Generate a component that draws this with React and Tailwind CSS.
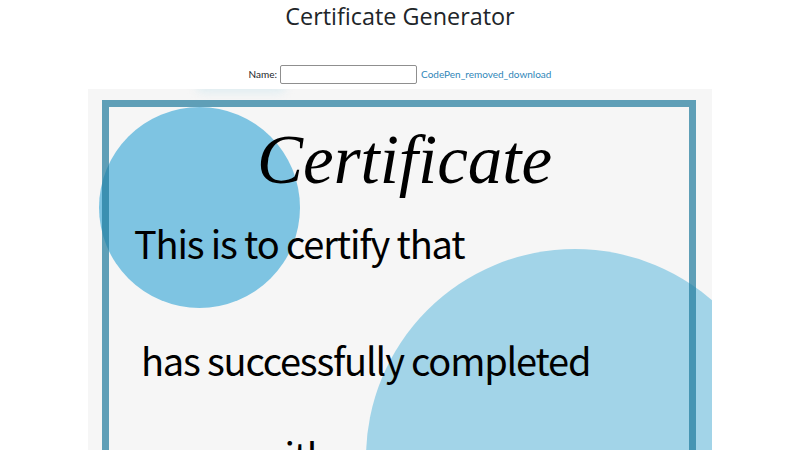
export default function App() {
    return (
        <div className="w-[800px] h-[450px] overflow-hidden bg-white flex flex-col items-center font-['Open_Sans','Noto_Sans',sans-serif]">
            <h1 className="pt-[1px] text-[23.4px] leading-[30px] font-normal text-[#212529]">Certificate Generator</h1>

            {/* name form */}
            <div className="mt-[34px] h-[20px] flex items-center justify-center text-[10px] text-[#212529] font-['Lato',sans-serif]">
                <label className="mr-[3px]">Name:</label>
                <input type="text" className="w-[137px] h-[19px] mr-[4px] bg-white border border-[#8f8f8f] rounded-[2px]" />
                <a href="#" className="text-[#2f86b8]">CodePen_removed_download</a>
            </div>

            {/* certificate */}
            <div className="relative isolate mt-[5px] w-[624px] h-[500px] shrink-0 overflow-hidden bg-[#f6f6f6] pt-[11px] pl-[14px] pr-[16px] text-black font-['Noto_Sans_CJK_JP','Noto_Sans',sans-serif]">
                <div className="absolute -z-10 left-[108px] top-[-12px] w-[90px] h-[16px] rounded-full bg-[#e0edf1] blur-[4px]"></div>
                <div className="absolute -z-10 left-[11px] top-[18px] w-[201px] h-[201px] rounded-full bg-[#7ec4e2]"></div>
                <div className="absolute -z-10 left-[278px] top-[160px] w-[418px] h-[418px] rounded-full bg-[#a2d4e8]"></div>

                <div className="h-[480px] border-[7px] border-[#1f7a9c]/70 flex flex-col pl-[25px]">
                    <div className="pt-[13px] pl-[123px] h-[108px] text-[69px] leading-[80px] italic font-['Liberation_Serif',cursive]">Certificate</div>
                    <p className="text-[38px] leading-[56px] tracking-[-1.15px]">This is to certify that</p>
                    <p className="mt-[61px] pl-[7px] text-[38px] leading-[56px] tracking-[-1.2px]">has successfully completed</p>
                    <p className="mt-[39px] pl-[3px] text-[38px] leading-[56px] tracking-[-1.2px]">course with a score</p>
                </div>
            </div>
        </div>
    );
}
